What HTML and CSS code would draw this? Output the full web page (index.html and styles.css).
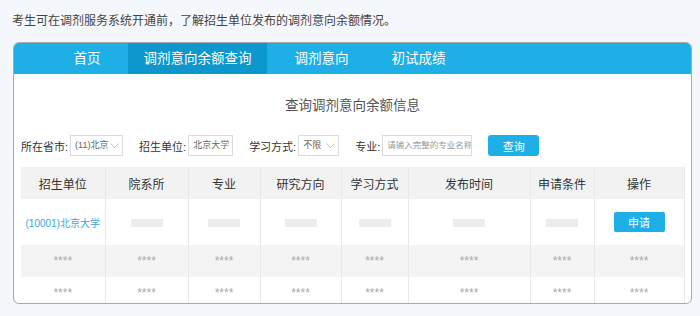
FILE: index.html
```html
<!DOCTYPE html>
<html lang="zh-CN">
<head>
    <meta charset="UTF-8">
    <meta name="viewport" content="width=device-width, initial-scale=1.0">
    <title>调剂意向余额查询</title>
    <link rel="stylesheet" href="styles.css">
</head>
<body>

<p class="intro">考生可在调剂服务系统开通前，了解招生单位发布的调剂意向余额情况。</p>

<div class="panel">
    <div class="tabs">
        <span class="tab">首页</span>
        <span class="tab active">调剂意向余额查询</span>
        <span class="tab">调剂意向</span>
        <span class="tab">初试成绩</span>
    </div>

    <h2 class="title">查询调剂意向余额信息</h2>

    <div class="filters">
        <div class="field">
            <label>所在省市:</label>
            <div class="select-box w-prov">
                <span>(11)北京</span>
                <svg width="9" height="5" viewBox="0 0 9 5"><polyline points="0.5,0.5 4.5,4.5 8.5,0.5" fill="none" stroke="#c4c4c4" stroke-width="1"/></svg>
            </div>
        </div>
        <div class="field">
            <label>招生单位:</label>
            <div class="text-box w-unit">北京大学</div>
        </div>
        <div class="field">
            <label>学习方式:</label>
            <div class="select-box w-mode">
                <span>不限</span>
                <svg width="9" height="5" viewBox="0 0 9 5"><polyline points="0.5,0.5 4.5,4.5 8.5,0.5" fill="none" stroke="#c4c4c4" stroke-width="1"/></svg>
            </div>
        </div>
        <div class="field">
            <label>专业:</label>
            <div class="text-box w-major placeholder">请输入完整的专业名称</div>
        </div>
        <button type="button" class="btn-query">查询</button>
    </div>

    <table class="result">
        <colgroup>
            <col style="width:84px">
            <col style="width:83px">
            <col style="width:72px">
            <col style="width:81px">
            <col style="width:67px">
            <col style="width:122px">
            <col style="width:64px">
            <col style="width:90px">
        </colgroup>
        <thead>
            <tr>
                <th>招生单位</th>
                <th>院系所</th>
                <th>专业</th>
                <th>研究方向</th>
                <th>学习方式</th>
                <th>发布时间</th>
                <th>申请条件</th>
                <th>操作</th>
            </tr>
        </thead>
        <tbody>
            <tr class="first">
                <td><a class="unit-link">(10001)北京大学</a></td>
                <td><span class="blank"></span></td>
                <td><span class="blank"></span></td>
                <td><span class="blank"></span></td>
                <td><span class="blank"></span></td>
                <td><span class="blank"></span></td>
                <td><span class="blank"></span></td>
                <td><button type="button" class="btn-apply">申请</button></td>
            </tr>
            <tr class="grey">
                <td class="stars">****</td><td class="stars">****</td><td class="stars">****</td><td class="stars">****</td>
                <td class="stars">****</td><td class="stars">****</td><td class="stars">****</td><td class="stars">****</td>
            </tr>
            <tr>
                <td class="stars">****</td><td class="stars">****</td><td class="stars">****</td><td class="stars">****</td>
                <td class="stars">****</td><td class="stars">****</td><td class="stars">****</td><td class="stars">****</td>
            </tr>
        </tbody>
    </table>
</div>

</body>
</html>
```

FILE: styles.css
```css
body {
    margin: 0;
    padding: 0 8px 0 13px;
    background-color: #f4f7fb;
    font-family: "Liberation Sans", "Noto Sans CJK SC", sans-serif;
}
.intro {
    margin: 12px 0 0 -1px;
    font-size: 12px;
    line-height: 18px;
    color: #444;
}
.panel {
    margin-top: 12px;
    height: 260px;
    border: 1px solid #a9a9a9;
    border-radius: 6px;
    background-color: #fff;
    overflow: hidden;
}
.tabs {
    display: flex;
    height: 31px;
    padding-left: 44px;
    background-color: #1eafe7;
}
.tab {
    margin-right: 12px;
    padding: 0 15.5px;
    line-height: 31px;
    font-size: 13.5px;
    color: #fff;
    white-space: nowrap;
}
.tab.active {
    background-color: #0c98cc;
}
.title {
    margin: 22px 0 0;
    text-align: center;
    font-size: 13.5px;
    line-height: 20px;
    font-weight: normal;
    color: #555;
}
.filters {
    display: flex;
    align-items: center;
    height: 21px;
    margin-top: 19px;
    padding-left: 7px;
}
.field {
    display: flex;
    align-items: center;
    margin-right: 16px;
}
.field label {
    margin-right: 2px;
    font-size: 11px;
    color: #333;
}
.select-box, .text-box {
    box-sizing: border-box;
    height: 21px;
    border: 1px solid #dcdcdc;
    background-color: #fff;
    font-size: 9px;
    line-height: 19px;
    color: #666;
    white-space: nowrap;
}
.select-box {
    display: flex;
    align-items: center;
    justify-content: space-between;
    padding: 0 3px 0 4px;
}
.select-box svg {
    flex-shrink: 0;
}
.text-box {
    padding: 0 4px;
    overflow: hidden;
}
.text-box.placeholder {
    font-size: 8.5px;
    color: #999;
}
.w-prov { width: 53px; }
.w-unit { width: 45px; }
.w-mode { width: 41px; }
.w-major { width: 90px; }
.btn-query {
    width: 51px;
    height: 21px;
    padding: 0;
    border: none;
    border-radius: 3px;
    background-color: #1eafe7;
    color: #fff;
    font-family: inherit;
    font-size: 11px;
}
.result {
    width: 663px;
    margin: 11px 7px 0;
    border-collapse: collapse;
    table-layout: fixed;
}
.result th, .result td {
    padding: 0;
    text-align: center;
    vertical-align: middle;
    border-left: 1px solid #e8e8e8;
}
.result th:first-child, .result td:first-child {
    border-left: none;
}
.result th:last-child, .result td:last-child {
    border-right: 1px solid #e8e8e8;
}
.result th {
    height: 32px;
    background-color: #f2f2f2;
    font-size: 12px;
    font-weight: normal;
    color: #333;
}
.result td {
    height: 32px;
}
.result tr.first td {
    height: 46px;
}
.result tr.grey td {
    background-color: #f4f4f4;
}
.unit-link {
    font-size: 10px;
    color: #36a9e1;
}
.blank {
    display: inline-block;
    width: 32px;
    height: 8px;
    background-color: #ececec;
    vertical-align: middle;
}
.stars {
    font-size: 12px;
    color: #aaa;
}
.btn-apply {
    width: 51px;
    height: 20px;
    padding: 0;
    border: none;
    border-radius: 2px;
    background-color: #1eafe7;
    color: #fff;
    font-family: inherit;
    font-size: 11px;
}
```
